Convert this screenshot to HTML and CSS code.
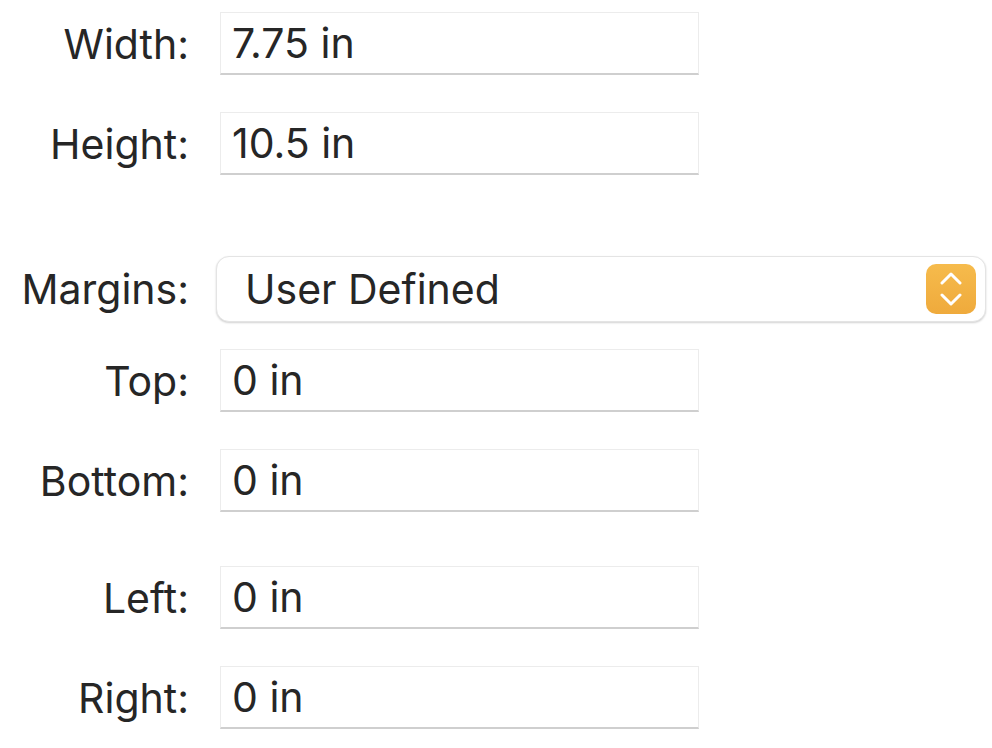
FILE: index.html
```html
<!DOCTYPE html>
<html>
<head>
<meta charset="utf-8">
<link rel="stylesheet" href="styles.css">
</head>
<body>
<div class="form">
  <div class="row r-width"><span class="label">Width:</span><div class="field">7.75 in</div></div>
  <div class="row r-height"><span class="label">Height:</span><div class="field">10.5 in</div></div>
  <div class="row r-margins"><span class="label">Margins:</span>
    <div class="popup"><span class="popup-text">User Defined</span>
      <span class="stepper"><svg width="22" height="36" viewBox="0 0 22 36"><path d="M2 12 L11 3 L20 12" fill="none" stroke="#fff" stroke-width="3" stroke-linecap="round" stroke-linejoin="round"/><path d="M2 24 L11 33 L20 24" fill="none" stroke="#fff" stroke-width="3" stroke-linecap="round" stroke-linejoin="round"/></svg></span>
    </div>
  </div>
  <div class="row r-top"><span class="label">Top:</span><div class="field">0 in</div></div>
  <div class="row r-bottom"><span class="label">Bottom:</span><div class="field">0 in</div></div>
  <div class="row r-left"><span class="label">Left:</span><div class="field">0 in</div></div>
  <div class="row r-right"><span class="label">Right:</span><div class="field">0 in</div></div>
</div>
</body>
</html>
```
FILE: styles.css
```css
html, body { margin: 0; padding: 0; background: #fff; }
body {
  font-family: Inter, "Noto Sans", "Liberation Sans", sans-serif;
  color: #262626;
  font-size: 41px;
}
.form { padding-top: 12px; display: flex; flex-direction: column; }
.row {
  display: grid;
  grid-template-columns: 189px auto;
  column-gap: 31px;
  align-items: center;
}
.label { text-align: right; }
.field {
  width: 466px;
  height: 60px;
  box-sizing: content-box;
  background: #fff;
  border: 1px solid #ececec;
  border-bottom: 2px solid #cfcfcf;
  padding-left: 11px;
  display: flex;
  align-items: center;
}
.r-height { margin-top: 37px; }
.r-margins { margin-top: 81px; column-gap: 27px; }
.r-top { margin-top: 27px; }
.r-bottom { margin-top: 37px; }
.r-left { margin-top: 54px; }
.r-right { margin-top: 37px; }
.popup {
  width: 770px;
  height: 66px;
  box-sizing: border-box;
  border: 1px solid #e4e4e4;
  border-radius: 13px;
  box-shadow: 0 1px 2px rgba(0,0,0,0.18);
  display: flex;
  align-items: center;
  justify-content: space-between;
  padding: 0 9px 0 28px;
  background: #fff;
}
.stepper {
  width: 50px;
  height: 50px;
  border-radius: 10px;
  background: linear-gradient(#f6bb4c, #efaa3c);
  display: flex;
  align-items: center;
  justify-content: center;
}
```
